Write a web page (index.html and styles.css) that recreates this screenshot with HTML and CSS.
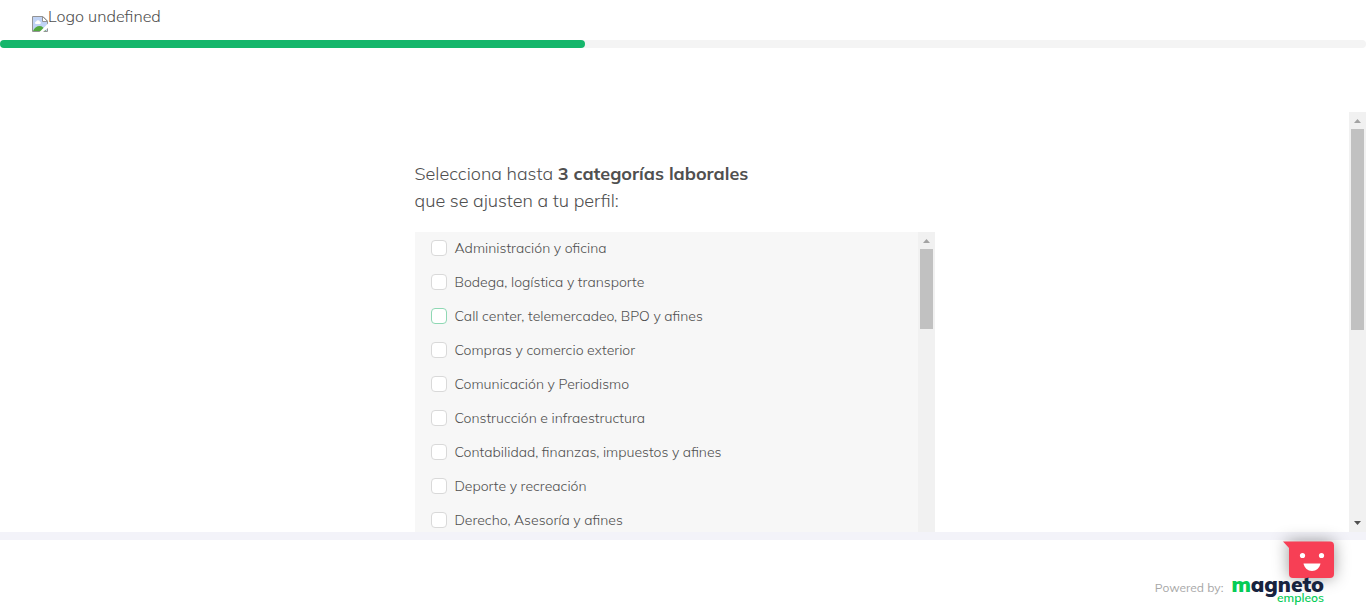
FILE: index.html
```html
<!DOCTYPE html>
<html lang="es">
<head>
<meta charset="utf-8">
<meta name="viewport" content="width=device-width, initial-scale=1">
<title>Categorías laborales</title>
<link rel="stylesheet" href="styles.css">
</head>
<body>
<header class="header">
  <svg class="header-icon" width="16" height="16" viewBox="0 0 16 16" aria-hidden="true">
    <path d="M.5.5h10.500l4.500 4.500v10.500H.5z" fill="#fff" stroke="#939393"/>
    <path d="M1 1h10v5h4v9H1z" fill="#c0d3f5"/>
    <path d="M3 7a1.500 1.500 0 0 1 1.200-1.500 2 2 0 0 1 3.600 0A1.300 1.300 0 0 1 8 8H4a1 1 0 0 1-1-1z" fill="#fff"/>
    <path d="M1 15c1.500-3.500 4-5 6.500-5s5 2 6.500 5z" fill="#53a93f"/>
    <path d="M10.500.5v5h5z" fill="#fff" stroke="#939393"/>
    <path d="M16 7.500L7.500 16h3.500l5-4z" fill="#fff"/>
  </svg>
  <span class="header-name">Logo undefined</span>
</header>
<div class="progress" role="progressbar" aria-label="Progreso" aria-valuemin="0" aria-valuemax="7" aria-valuenow="3">
  <div class="progress-fill" style="width: 42.857%"></div>
</div>
<main class="main">
  <div class="content">
    <form class="form">
      <h1 class="title">Selecciona hasta <strong>3 categorías laborales</strong><br>que se ajusten a tu perfil:</h1>
      <div class="panel">
        <ul class="options">
          <li><label class="option"><input class="check" type="checkbox">Administración y oficina</label></li>
          <li><label class="option"><input class="check" type="checkbox">Bodega, logística y transporte</label></li>
          <li><label class="option"><input class="check check-active" type="checkbox">Call center, telemercadeo, BPO y afines</label></li>
          <li><label class="option"><input class="check" type="checkbox">Compras y comercio exterior</label></li>
          <li><label class="option"><input class="check" type="checkbox">Comunicación y Periodismo</label></li>
          <li><label class="option"><input class="check" type="checkbox">Construcción e infraestructura</label></li>
          <li><label class="option"><input class="check" type="checkbox">Contabilidad, finanzas, impuestos y afines</label></li>
          <li><label class="option"><input class="check" type="checkbox">Deporte y recreación</label></li>
          <li><label class="option"><input class="check" type="checkbox">Derecho, Asesoría y afines</label></li>
        </ul>
        <div class="scrollbar" aria-hidden="true">
          <svg class="arrow arrow-muted" viewBox="0 0 17 17"><path d="M5 11l3.500-4 3.500 4z"/></svg>
          <div class="thumb thumb-short"></div>
        </div>
      </div>
    </form>
  </div>
  <div class="scrollbar" aria-hidden="true">
    <svg class="arrow arrow-muted" viewBox="0 0 17 17"><path d="M5 11l3.500-4 3.500 4z"/></svg>
    <div class="thumb"></div>
    <svg class="arrow arrow-end" viewBox="0 0 17 17"><path d="M5 6l3.500 4L12 6z"/></svg>
  </div>
</main>
<footer class="footer">
  <span class="powered">Powered by:</span>
  <a class="brand" href="#" aria-label="magneto empleos">
    <span class="brand-name"><span class="brand-m">m</span>agneto</span>
    <span class="brand-sub">empleos</span>
  </a>
  <button class="chat" type="button" aria-label="Abrir chat">
    <svg width="52" height="38" viewBox="0 0 52 38" aria-hidden="true">
      <path d="M0 .5H47a4 4 0 0 1 4 4V33a4 4 0 0 1-4 4H10A4 4 0 0 1 6 33V7z" fill="#f73f55"/>
      <circle cx="19.500" cy="14.500" r="2.600" fill="#fff"/>
      <circle cx="38.500" cy="14.500" r="2.600" fill="#fff"/>
      <path d="M20.500 22.500h17c-.8 4.500-4.300 7.500-8.500 7.500s-7.700-3-8.500-7.500z" fill="#fff"/>
    </svg>
  </button>
</footer>
</body>
</html>
```

FILE: styles.css
```css
* {
  box-sizing: border-box;
}

body {
  display: flex;
  flex-direction: column;
  height: 100vh;
  margin: 0;
  overflow: hidden;
  background: #fff;
  color: #505050;
  font-family: Mulish, Muli, Lato, "Open Sans", sans-serif;
  font-weight: 300;
}

.header {
  display: flex;
  align-items: flex-start;
  padding: 4px 32px;
}

.header-icon {
  margin-top: 12px;
}

.header-name {
  font-size: 16px;
  line-height: 24px;
  padding-bottom: 8px;
}

.progress {
  height: 8px;
  border-radius: 4px;
  background: #f4f4f4;
}

.progress-fill {
  height: 100%;
  border-radius: 4px;
  background: #15b66b;
}

.main {
  display: flex;
  flex: 1;
  min-height: 0;
  margin-top: 64px;
}

.content {
  display: flex;
  flex: 1;
  justify-content: center;
}

.form {
  display: flex;
  flex-direction: column;
  width: 100%;
  max-width: 520px;
  padding-top: 48px;
}

.title {
  margin: 0 0 18px;
  font-size: 18px;
  font-weight: 300;
  line-height: 27px;
}

.title strong {
  font-weight: 700;
}

.panel {
  display: flex;
  flex: 1;
  min-height: 0;
  background: #f7f7f7;
}

.options {
  flex: 1;
  margin: 0;
  padding: 0 16px;
  overflow: hidden;
  list-style: none;
}

.option {
  display: flex;
  align-items: center;
  gap: 8px;
  height: 34px;
  padding-bottom: 2px;
  font-size: 14px;
}

.check {
  appearance: none;
  width: 16px;
  height: 16px;
  margin: 0;
  border: 1px solid #d9d9d9;
  border-radius: 4px;
  background: #fff;
}

.check-active {
  border-color: #8fd8b4;
}

.check:checked {
  background: #15b66b;
}

.scrollbar {
  display: flex;
  flex-direction: column;
  width: 17px;
  background: #f1f1f1;
}

.arrow {
  width: 17px;
  height: 17px;
  fill: #505050;
}

.arrow-muted {
  fill: #a3a3a3;
}

.arrow-end {
  margin-top: auto;
}

.thumb {
  height: 201px;
  margin: 0 2px;
  background: #c1c1c1;
}

.thumb-short {
  height: 80px;
}

.footer {
  position: relative;
  display: flex;
  align-items: flex-start;
  justify-content: flex-end;
  gap: 8px;
  height: 80px;
  padding: 36px 42px 0;
  border-top: 8px solid #f3f3f9;
}

.powered {
  margin-top: 2px;
  color: #a8a8a8;
  font-size: 12px;
  font-weight: 400;
  line-height: 20px;
}

.brand {
  z-index: 1;
  display: flex;
  flex-direction: column;
  align-items: flex-end;
  color: #17233f;
  text-decoration: none;
}

.brand-name {
  font-size: 21px;
  font-weight: 900;
  line-height: 16px;
}

.brand-m {
  color: #05cc56;
}

.brand-sub {
  color: #05cc56;
  font-size: 12px;
  font-weight: 600;
  line-height: 12px;
}

.chat {
  position: absolute;
  top: 1px;
  right: 31px;
  display: flex;
  padding: 0;
  border: 0;
  background: none;
  filter: drop-shadow(0 0 8px rgba(0, 0, 0, .4));
}
```
